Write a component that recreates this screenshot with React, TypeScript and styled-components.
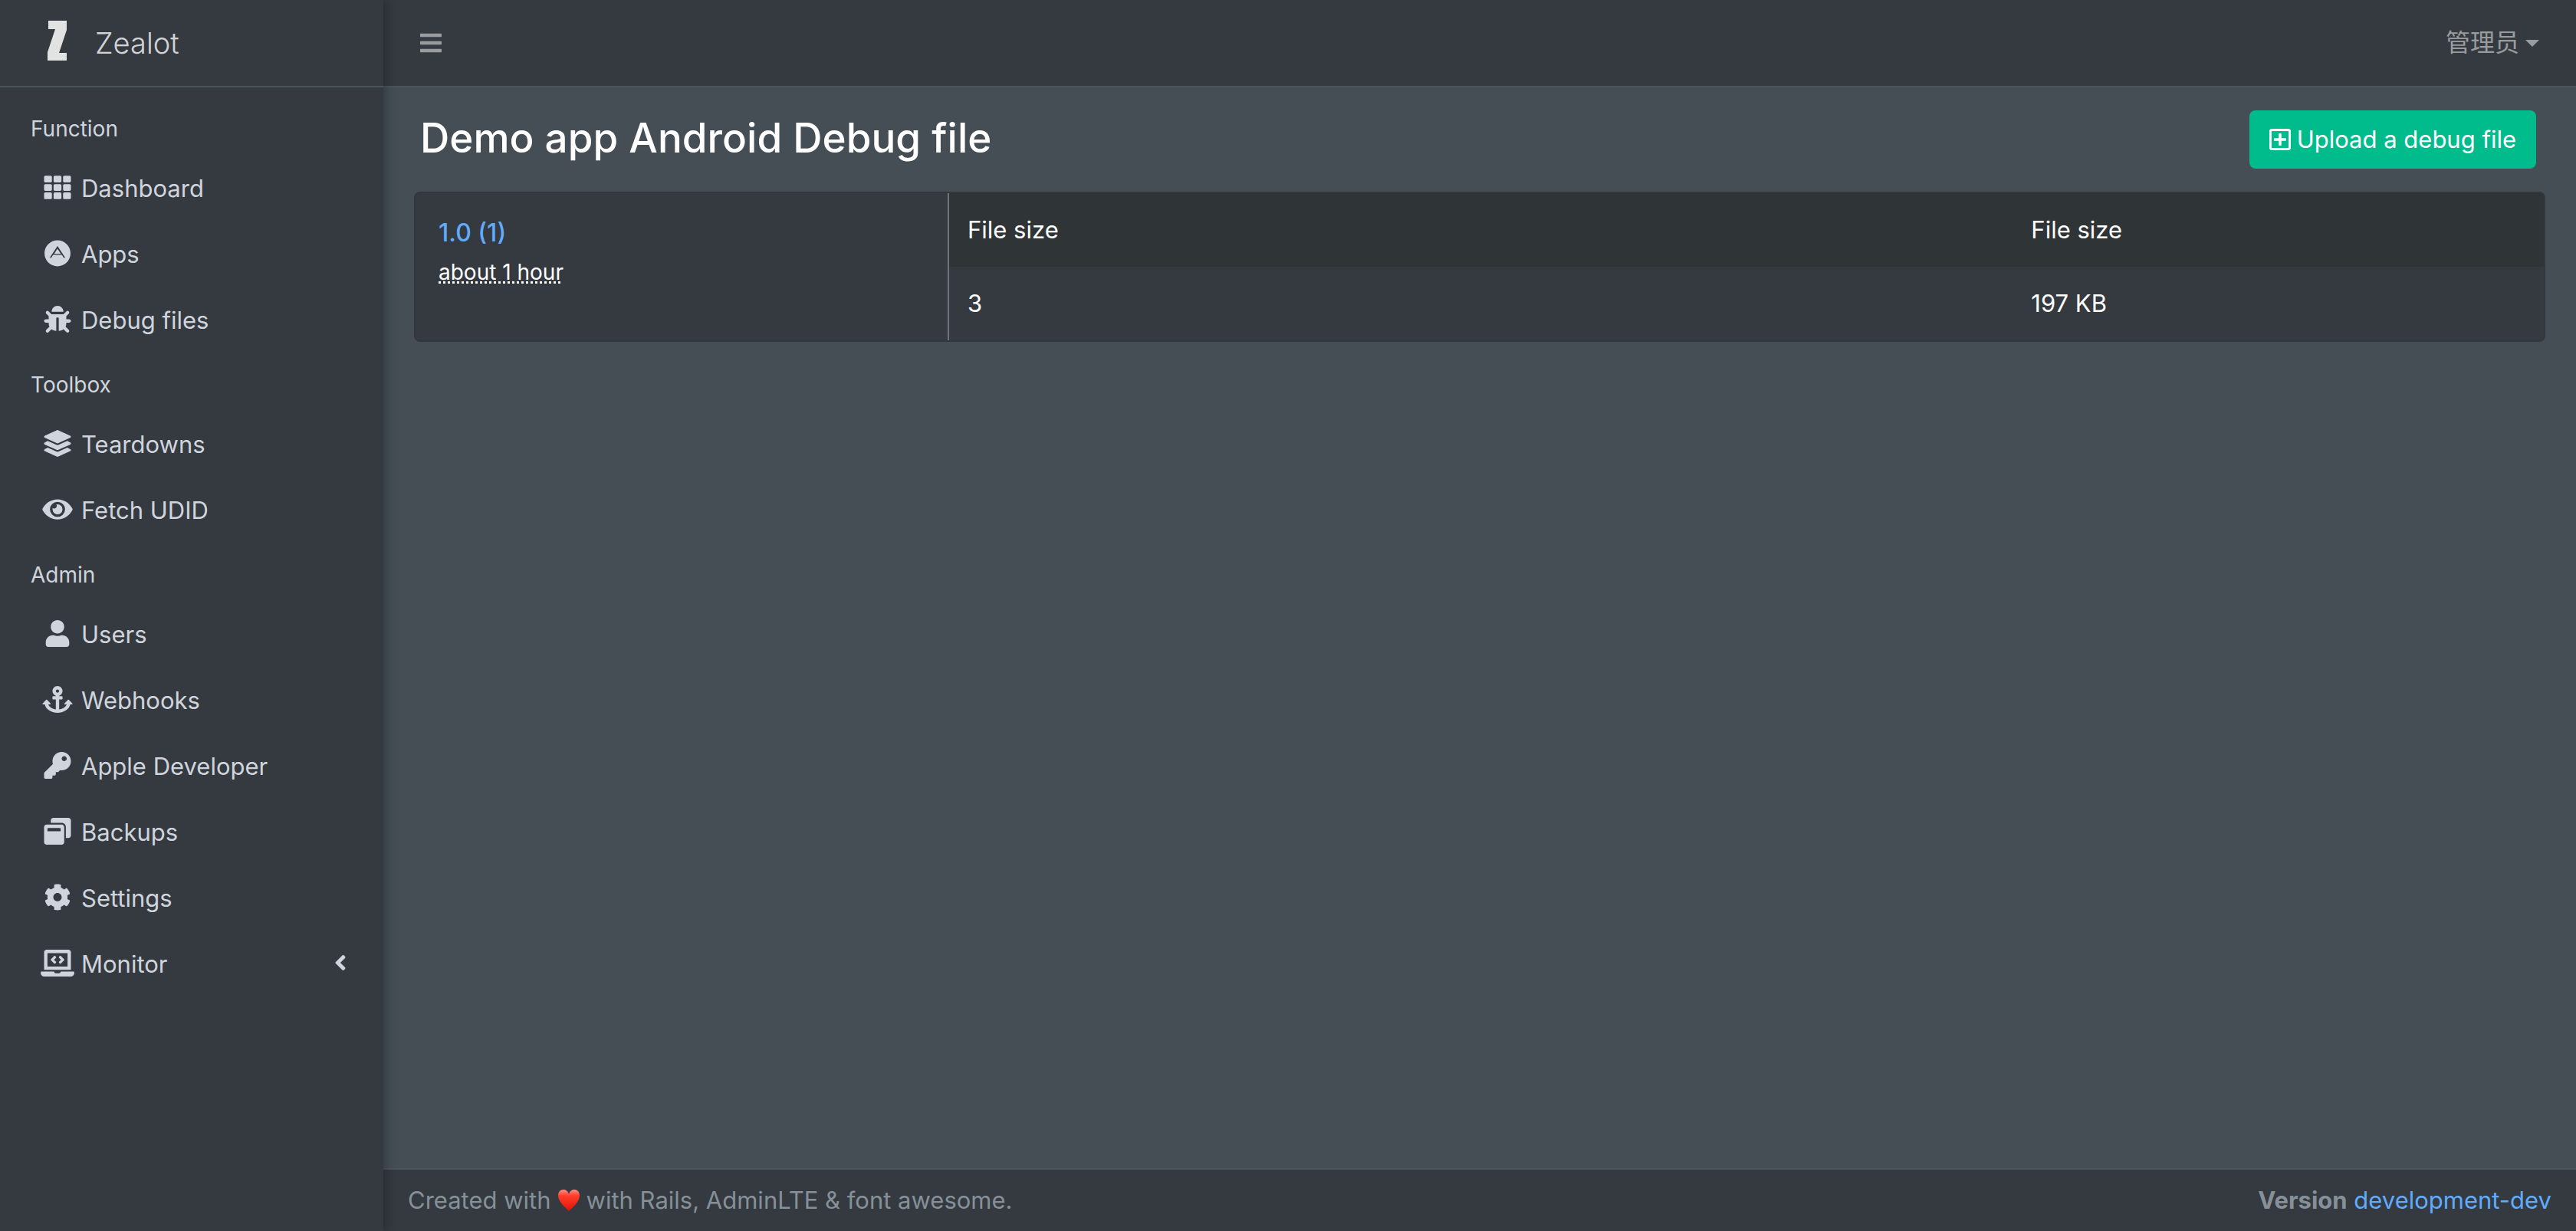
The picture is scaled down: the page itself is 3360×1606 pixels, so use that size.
import React from "react";
import styled, { createGlobalStyle } from "styled-components";
import {
  FaAdn, FaAnchor, FaAngleLeft, FaBars, FaBug, FaCog, FaEye, FaKey, FaLaptopCode,
  FaLayerGroup, FaRegPlusSquare, FaTh, FaUser, FaWindowRestore,
} from "react-icons/fa";
import type { IconType } from "react-icons";

const color = {
  panel: "#343a40",
  page: "#454d55",
  line: "#4b545c",
  thead: "#2f3437",
  nav: "#d0d4dd",
  link: "#61abfb",
  muted: "#869099",
  success: "#00bc8c",
};

const Global = createGlobalStyle`
  *, *::before, *::after { box-sizing: border-box; }
  body {
    margin: 0;
    background: ${color.page};
    color: #fff;
    font-family: Inter, "Noto Sans CJK SC", sans-serif;
    font-size: 31px;
    line-height: 48px;
  }
  a { color: ${color.link}; text-decoration: none; }
  button { font: inherit; cursor: pointer; }
`;

const Layout = styled.div`
  display: grid;
  grid-template-columns: 500px minmax(0, 1fr);
  min-height: 100vh;
`;

const Sidebar = styled.aside`
  position: relative;
  z-index: 1;
  background: ${color.panel};
  box-shadow: 0 0 16px rgba(0, 0, 0, 0.35);
  clip-path: inset(0 -40px 0 0);
`;

const Brand = styled.a`
  display: flex;
  align-items: center;
  gap: 36px;
  height: 114px;
  padding: 0 60px;
  border-bottom: 2px solid ${color.line};
  color: rgba(255, 255, 255, 0.8);
  font-size: 38px;
  font-weight: 300;
`;

const Logo = styled.svg`
  width: 28px;
  height: 54px;
  margin-bottom: 6px;
  fill: #e1e3e3;
`;

const Nav = styled.nav`
  padding: 16px;
`;

const NavHeading = styled.h2`
  margin: 0;
  padding: 16px 24px;
  color: ${color.nav};
  font-size: 28px;
  font-weight: 400;
  line-height: 44px;
`;

const NavList = styled.ul`
  margin: 0;
  padding: 0;
  list-style: none;
`;

const NavLink = styled.a`
  display: flex;
  align-items: center;
  gap: 4px;
  margin-bottom: 6px;
  padding: 16px 32px;
  color: ${color.nav};
`;

const NavIcon = styled.span`
  display: flex;
  flex: none;
  justify-content: center;
  width: 54px;
  padding-bottom: 4px;

  svg {
    width: 44px;
    height: 35px;
  }
`;

const NavArrow = styled(FaAngleLeft)`
  width: 16px;
  height: 32px;
  margin-left: auto;
  margin-bottom: 4px;
`;

const Main = styled.div`
  display: flex;
  flex-direction: column;
  min-width: 0;
`;

const Topbar = styled.header`
  display: flex;
  align-items: center;
  justify-content: space-between;
  height: 114px;
  padding: 0 48px;
  background: ${color.panel};
  border-bottom: 2px solid ${color.line};
`;

const TopButton = styled.button`
  display: flex;
  align-items: center;
  gap: 8px;
  padding: 0;
  border: 0;
  background: none;
  color: rgba(255, 255, 255, 0.5);
  font-size: 32px;

  svg {
    width: 28px;
    height: 32px;
  }
`;

const Caret = styled.span`
  border: 9px solid transparent;
  border-top-color: currentColor;
  border-bottom: 0;
`;

const Content = styled.main`
  flex: 1;
  padding: 30px 40px;
`;

const Heading = styled.div`
  display: flex;
  align-items: flex-start;
  justify-content: space-between;
  padding: 0 12px 30px 8px;
`;

const Title = styled.h1`
  margin: 0;
  font-size: 53px;
  font-weight: 500;
  line-height: 72px;
`;

const UploadButton = styled.button`
  display: flex;
  align-items: center;
  gap: 8px;
  padding: 14px 26px;
  border: 0;
  border-radius: 8px;
  background: ${color.success};
  color: #fff;

  svg {
    width: 28px;
    height: 32px;
  }
`;

const Card = styled.section`
  display: grid;
  grid-template-columns: 1fr 3fr;
  border: 2px solid #32383d;
  border-radius: 8px;
  background: ${color.panel};
  overflow: hidden;
`;

const Release = styled.div`
  padding: 28px 30px;
`;

const ReleaseLink = styled.a`
  display: block;
  margin-bottom: 2px;
  font-size: 32px;
  font-weight: 500;
`;

const Age = styled.abbr`
  font-size: 28px;
  text-decoration: underline dotted 3px;
  text-decoration-skip-ink: none;
`;

const Releases = styled.div`
  border-left: 2px solid #6c757d;
`;

const Table = styled.table`
  width: 100%;
  border-collapse: collapse;
  table-layout: fixed;
  text-align: left;

  thead { background: ${color.thead}; }
  th, td { height: 96px; padding: 24px; font-weight: 400; }
  th:first-child { width: 66.7%; }
`;

const Footer = styled.footer`
  display: flex;
  justify-content: space-between;
  padding: 16px 32px;
  border-top: 2px solid ${color.line};
  background: ${color.panel};
  color: ${color.muted};
`;

const FooterText = styled.div`
  display: flex;
  align-items: center;
  gap: 8px;
`;

const Heart = styled.svg`
  width: 30px;
  height: 30px;
`;

type Item = { label: string; icon: IconType; nested?: boolean };

const groups: { title: string; items: Item[] }[] = [
  {
    title: "Function",
    items: [
      { label: "Dashboard", icon: FaTh },
      { label: "Apps", icon: FaAdn },
      { label: "Debug files", icon: FaBug },
    ],
  },
  {
    title: "Toolbox",
    items: [
      { label: "Teardowns", icon: FaLayerGroup },
      { label: "Fetch UDID", icon: FaEye },
    ],
  },
  {
    title: "Admin",
    items: [
      { label: "Users", icon: FaUser },
      { label: "Webhooks", icon: FaAnchor },
      { label: "Apple Developer", icon: FaKey },
      { label: "Backups", icon: FaWindowRestore },
      { label: "Settings", icon: FaCog },
      { label: "Monitor", icon: FaLaptopCode, nested: true },
    ],
  },
];

export default function App() {
  return (
    <>
      <Global />
      <Layout>
        <Sidebar>
          <Brand href="#">
            <Logo viewBox="0 0 28 54" aria-hidden="true">
              <path d="M3 1H27V13L17 43H27V53H2V42L12 12H3Z" />
            </Logo>
            Zealot
          </Brand>
          <Nav>
            {groups.map((group) => (
              <section key={group.title}>
                <NavHeading>{group.title}</NavHeading>
                <NavList>
                  {group.items.map(({ label, icon: Icon, nested }) => (
                    <li key={label}>
                      <NavLink href="#">
                        <NavIcon><Icon /></NavIcon>
                        {label}
                        {nested && <NavArrow />}
                      </NavLink>
                    </li>
                  ))}
                </NavList>
              </section>
            ))}
          </Nav>
        </Sidebar>
        <Main>
          <Topbar>
            <TopButton aria-label="Toggle sidebar"><FaBars /></TopButton>
            <TopButton>管理员<Caret /></TopButton>
          </Topbar>
          <Content>
            <Heading>
              <Title>Demo app Android Debug file</Title>
              <UploadButton><FaRegPlusSquare />Upload a debug file</UploadButton>
            </Heading>
            <Card>
              <Release>
                <ReleaseLink href="#">1.0 (1)</ReleaseLink>
                <Age>about 1 hour</Age>
              </Release>
              <Releases>
                <Table>
                  <thead>
                    <tr><th>File size</th><th>File size</th></tr>
                  </thead>
                  <tbody>
                    <tr><td>3</td><td>197 KB</td></tr>
                  </tbody>
                </Table>
              </Releases>
            </Card>
          </Content>
          <Footer>
            <FooterText>
              <span>Created with</span>
              <Heart viewBox="0 0 30 30" role="img" aria-label="love">
                <defs>
                  <linearGradient id="heart" x1="0" y1="0" x2="0" y2="1">
                    <stop offset="0" stopColor="#ff8f86" />
                    <stop offset="0.3" stopColor="#ff3b2a" />
                    <stop offset="1" stopColor="#e01406" />
                  </linearGradient>
                </defs>
                <path
                  fill="url(#heart)"
                  d="M15 29C11 25 1 17 1 8.500C1 4 4 1 8 1C11.500 1 14 3.500 15 7C16 3.500 18.500 1 22 1C26 1 29 4 29 8.500C29 17 19 25 15 29Z"
                />
              </Heart>
              <span>with Rails, AdminLTE &amp; font awesome.</span>
            </FooterText>
            <div><strong>Version</strong> <a href="#">development-dev</a></div>
          </Footer>
        </Main>
      </Layout>
    </>
  );
}
